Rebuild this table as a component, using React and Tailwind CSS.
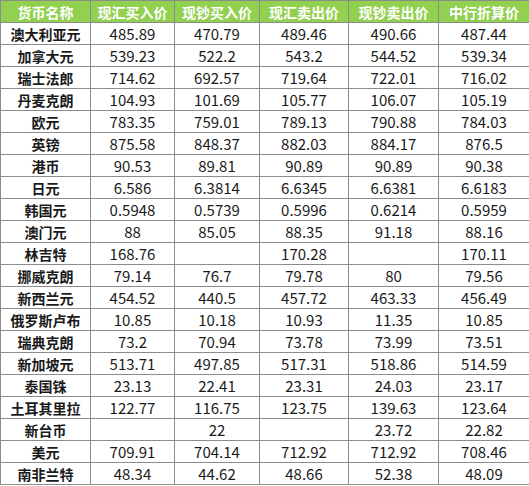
import React from 'react';

const headers = ['货币名称', '现汇买入价', '现钞买入价', '现汇卖出价', '现钞卖出价', '中行折算价'];

const rates = [
  ['澳大利亚元', '485.89', '470.79', '489.46', '490.66', '487.44'],
  ['加拿大元', '539.23', '522.2', '543.2', '544.52', '539.34'],
  ['瑞士法郎', '714.62', '692.57', '719.64', '722.01', '716.02'],
  ['丹麦克朗', '104.93', '101.69', '105.77', '106.07', '105.19'],
  ['欧元', '783.35', '759.01', '789.13', '790.88', '784.03'],
  ['英镑', '875.58', '848.37', '882.03', '884.17', '876.5'],
  ['港币', '90.53', '89.81', '90.89', '90.89', '90.38'],
  ['日元', '6.586', '6.3814', '6.6345', '6.6381', '6.6183'],
  ['韩国元', '0.5948', '0.5739', '0.5996', '0.6214', '0.5959'],
  ['澳门元', '88', '85.05', '88.35', '91.18', '88.16'],
  ['林吉特', '168.76', '', '170.28', '', '170.11'],
  ['挪威克朗', '79.14', '76.7', '79.78', '80', '79.56'],
  ['新西兰元', '454.52', '440.5', '457.72', '463.33', '456.49'],
  ['俄罗斯卢布', '10.85', '10.18', '10.93', '11.35', '10.85'],
  ['瑞典克朗', '73.2', '70.94', '73.78', '73.99', '73.51'],
  ['新加坡元', '513.71', '497.85', '517.31', '518.86', '514.59'],
  ['泰国铢', '23.13', '22.41', '23.31', '24.03', '23.17'],
  ['土耳其里拉', '122.77', '116.75', '123.75', '139.63', '123.64'],
  ['新台币', '', '22', '', '23.72', '22.82'],
  ['美元', '709.91', '704.14', '712.92', '712.92', '708.46'],
  ['南非兰特', '48.34', '44.62', '48.66', '52.38', '48.09'],
];

const App = () => {
  return (
    <div className="w-[529px] bg-white font-['Noto_Sans_CJK_SC',sans-serif]">
      <table className="w-[529px] table-fixed border-collapse">
        <colgroup>
          <col className="w-[90px]" />
          <col className="w-[84px]" />
          <col className="w-[85px]" />
          <col className="w-[89px]" />
          <col className="w-[90px]" />
          <col className="w-[91px]" />
        </colgroup>
        <thead>
          <tr className="bg-[#92d050]">
            {headers.map((h) => (
              <th
                key={h}
                className="h-[22px] p-0 border border-[#8c8c8c] text-center text-[14px] leading-none font-bold text-white"
              >
                {h}
              </th>
            ))}
          </tr>
        </thead>
        <tbody>
          {rates.map((row) => (
            <tr key={row[0]}>
              {row.map((cell, i) => (
                <td
                  key={i}
                  className={
                    i === 0
                      ? 'h-[22px] p-0 border border-[#8c8c8c] text-center text-[14px] leading-none font-bold text-[#1a1a1a]'
                      : 'h-[22px] p-0 border border-[#8c8c8c] text-center text-[15px] leading-none text-[#1a1a1a]'
                  }
                >
                  {cell}
                </td>
              ))}
            </tr>
          ))}
        </tbody>
      </table>
    </div>
  );
};

export default App;
